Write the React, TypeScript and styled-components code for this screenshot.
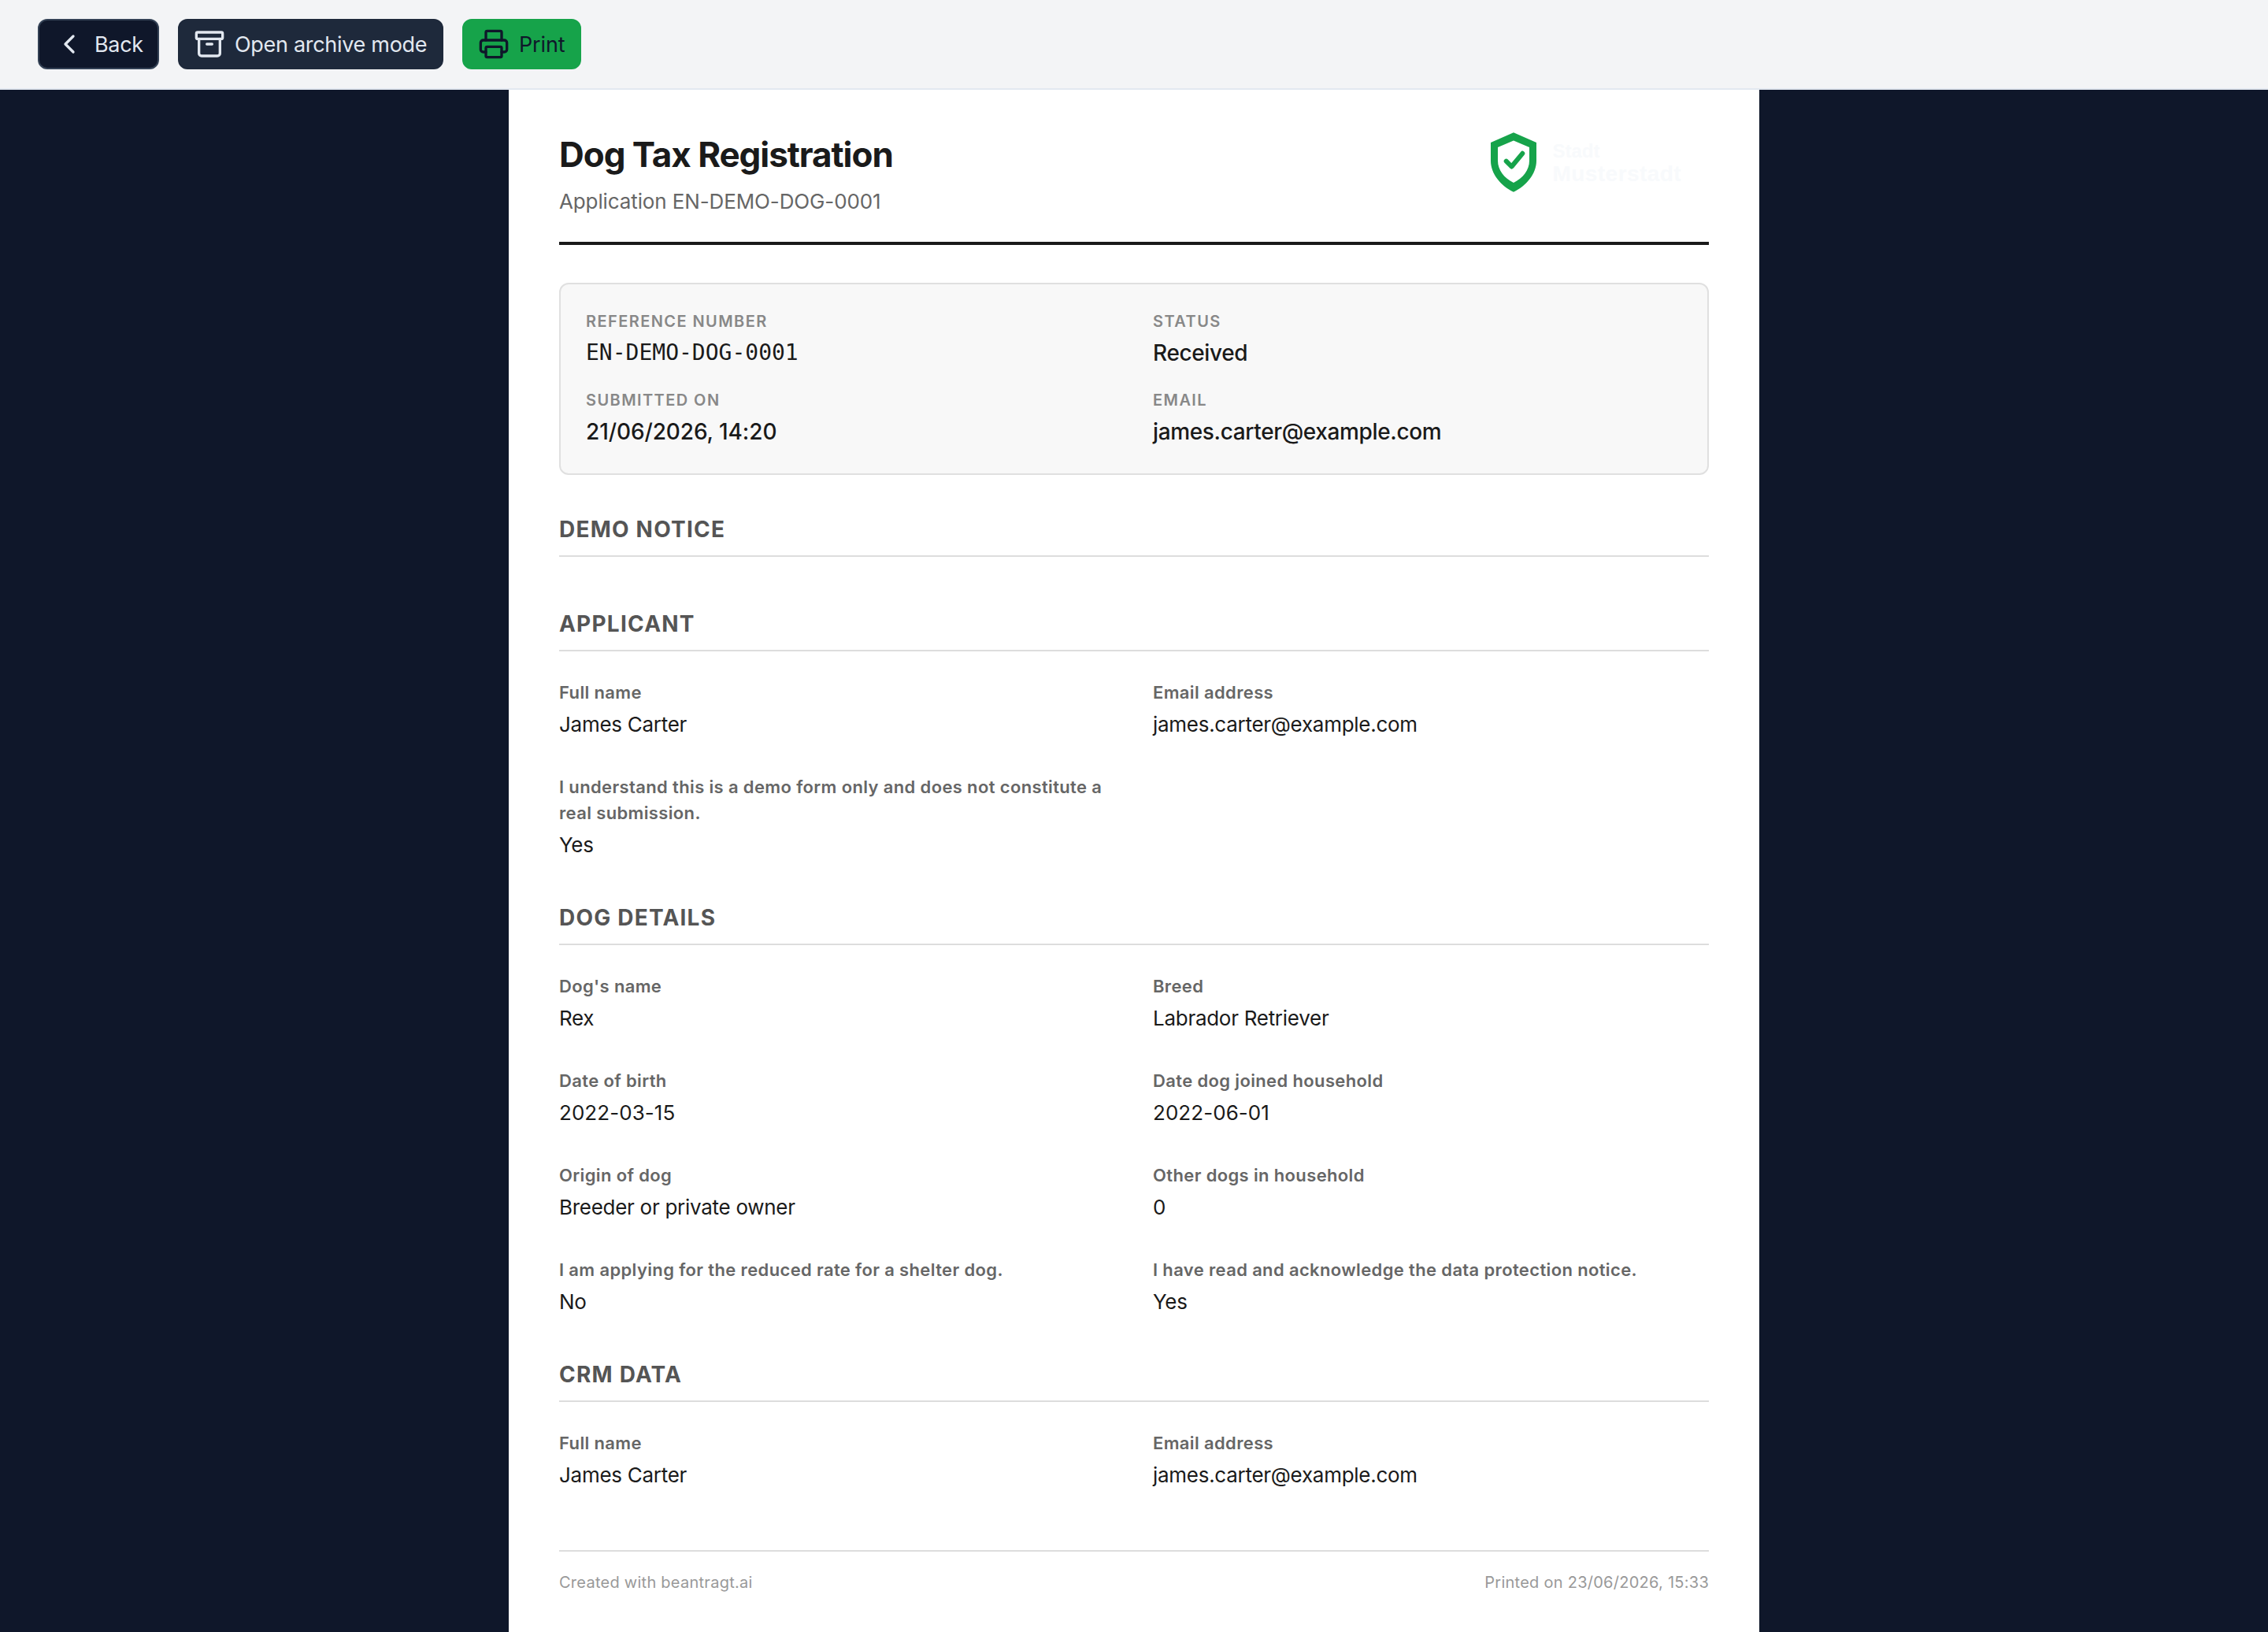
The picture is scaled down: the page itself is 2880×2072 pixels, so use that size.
import React from "react";
import styled, { createGlobalStyle } from "styled-components";

const sans = `Inter, "Liberation Sans", sans-serif`;

const GlobalStyle = createGlobalStyle`
  *, *::before, *::after { box-sizing: border-box; }
  body {
    margin: 0;
    background: #0f172a;
    color: #1a1a1a;
    font-family: ${sans};
    font-optical-sizing: none;
  }
`;

const Screen = styled.div`
  display: flex;
  flex-direction: column;
  height: 2072px;
  overflow: hidden;
  background: #0f172a;
`;

const Toolbar = styled.header`
  display: flex;
  align-items: flex-start;
  gap: 24px;
  flex: none;
  height: 114px;
  padding: 24px 48px;
  background: #f3f4f6;
  border-bottom: 2px solid #e2e8f0;
`;

const Button = styled.button<{ $bg: string; $fg: string; $border: string; $width: number }>`
  display: flex;
  align-items: center;
  gap: 12px;
  width: ${(p) => p.$width}px;
  height: 64px;
  padding: 0 0 0 18px;
  border: 2px solid ${(p) => p.$border};
  border-radius: 12px;
  background: ${(p) => p.$bg};
  color: ${(p) => p.$fg};
  font: 430 27px/40px ${sans};
  white-space: nowrap;
`;

const Glyph = styled.svg`
  flex: none;
  width: 40px;
  height: 40px;
  fill: none;
  stroke: currentColor;
  stroke-width: 2;
  stroke-linecap: round;
  stroke-linejoin: round;
`;

const Caption = styled.span<{ $spacing: number }>`
  padding-top: 2px;
  letter-spacing: ${(p) => p.$spacing}px;
`;

const Paper = styled.main`
  flex: 1;
  width: 1588px;
  margin: 0 auto;
  padding: 48px 64px 0;
  background: #fff;
`;

const DocHeader = styled.div`
  display: flex;
  justify-content: space-between;
  align-items: flex-start;
  padding-bottom: 32px;
  margin-bottom: 48px;
  border-bottom: 4px solid #1a1a1a;
`;

const Title = styled.h1`
  height: 66px;
  margin: 0 0 8px;
  font-size: 44px;
  font-weight: 700;
  line-height: 68px;
  letter-spacing: -1.06px;
`;

const Subtitle = styled.p`
  margin: 0;
  color: #666;
  font-size: 26px;
  line-height: 39px;
  letter-spacing: -0.12px;
`;

const Logo = styled.svg`
  flex: none;
  width: 290px;
  height: 96px;
`;

const Summary = styled.div`
  display: grid;
  grid-template-columns: 1fr 1fr;
  gap: 24px 48px;
  padding: 32px;
  margin-bottom: 48px;
  border: 2px solid #e0e0e0;
  border-radius: 12px;
  background: #f8f8f8;
`;

const SummaryLabel = styled.div`
  margin-bottom: 4px;
  color: #888;
  font-size: 20px;
  font-weight: 600;
  line-height: 30px;
  letter-spacing: 1.42px;
  text-transform: uppercase;
`;

const SummaryValue = styled.div<{ $mono?: boolean; $numeric: boolean }>`
  height: 42px;
  font-size: 28px;
  font-weight: 500;
  line-height: 42px;
  letter-spacing: ${(p) => (p.$mono ? 0 : p.$numeric ? -0.1 : -0.36)}px;
  ${(p) => p.$mono && `
    font-family: "DejaVu Sans Mono", monospace;
    font-weight: 400;
  `}
`;

const Section = styled.section`
  margin-bottom: 28px;
`;

const SectionTitle = styled.h2`
  margin: 0 0 36px;
  padding-bottom: 12px;
  border-bottom: 2px solid #ddd;
  color: #555;
  font-size: 28px;
  font-weight: 650;
  line-height: 42px;
  letter-spacing: 1.22px;
  text-transform: uppercase;
`;

const Fields = styled.div`
  display: grid;
  grid-template-columns: 1fr 1fr;
  gap: 20px 48px;
`;

const Field = styled.div`
  margin-bottom: 24px;
`;

const FieldLabel = styled.div`
  margin-bottom: 4px;
  color: #666;
  font-size: 22px;
  font-weight: 600;
  line-height: 33px;
  letter-spacing: 0.36px;
`;

const FieldValue = styled.div<{ $numeric: boolean }>`
  font-size: 26px;
  line-height: 39px;
  letter-spacing: ${(p) => (p.$numeric ? 0.05 : -0.28)}px;
`;

const Footer = styled.footer`
  display: flex;
  justify-content: space-between;
  margin-top: 52px;
  padding-top: 24px;
  border-top: 2px solid #ddd;
  color: #999;
  font-size: 20px;
  line-height: 30px;
  letter-spacing: 0.26px;
`;

const isNumeric = (value: string) => /^\d/.test(value);

const summary = [
  { label: "Reference number", value: "EN-DEMO-DOG-0001", mono: true },
  { label: "Status", value: "Received" },
  { label: "Submitted on", value: "21/06/2026, 14:20" },
  { label: "Email", value: "james.carter@example.com" },
];

const sections: { title: string; fields: [string, string][] }[] = [
  { title: "Demo notice", fields: [] },
  {
    title: "Applicant",
    fields: [
      ["Full name", "James Carter"],
      ["Email address", "james.carter@example.com"],
      ["I understand this is a demo form only and does not constitute a real submission.", "Yes"],
    ],
  },
  {
    title: "Dog details",
    fields: [
      ["Dog's name", "Rex"],
      ["Breed", "Labrador Retriever"],
      ["Date of birth", "2022-03-15"],
      ["Date dog joined household", "2022-06-01"],
      ["Origin of dog", "Breeder or private owner"],
      ["Other dogs in household", "0"],
      ["I am applying for the reduced rate for a shelter dog.", "No"],
      ["I have read and acknowledge the data protection notice.", "Yes"],
    ],
  },
  {
    title: "CRM data",
    fields: [
      ["Full name", "James Carter"],
      ["Email address", "james.carter@example.com"],
    ],
  },
];

export default function App() {
  return (
    <Screen>
      <GlobalStyle />
      <Toolbar>
        <Button $bg="#0f172a" $fg="#e2e8f0" $border="#334155" $width={154}>
          <Glyph viewBox="0 0 24 24"><path d="M15 6l-6 6l6 6" /></Glyph>
          <Caption $spacing={-0.3}>Back</Caption>
        </Button>
        <Button $bg="#1e293b" $fg="#e2e8f0" $border="#1e293b" $width={337}>
          <Glyph viewBox="0 0 24 24">
            <rect x="2" y="3" width="20" height="5" rx="1" />
            <path d="M4 8v11a2 2 0 0 0 2 2h12a2 2 0 0 0 2-2V8M10 12h4" />
          </Glyph>
          <Caption $spacing={-0.3}>Open archive mode</Caption>
        </Button>
        <Button $bg="#16a34a" $fg="#0f172a" $border="#16a34a" $width={151}>
          <Glyph viewBox="0 0 24 24">
            <path d="M6 18H4a2 2 0 0 1-2-2v-5a2 2 0 0 1 2-2h16a2 2 0 0 1 2 2v5a2 2 0 0 1-2 2h-2" />
            <path d="M6 9V3a1 1 0 0 1 1-1h10a1 1 0 0 1 1 1v6" />
            <rect x="6" y="14" width="12" height="8" rx="1" />
          </Glyph>
          <Caption $spacing={-0.15}>Print</Caption>
        </Button>
      </Toolbar>
      <Paper>
        <DocHeader>
          <div>
            <Title>Dog Tax Registration</Title>
            <Subtitle>Application EN-DEMO-DOG-0001</Subtitle>
          </div>
          <Logo viewBox="1880 162 290 96">
            <path fill="#16a34a" fillRule="evenodd" d="M1922 168.3L1951 181V204C1951 221 1938 236 1922 243.7C1906 236 1893 221 1893 204V181ZM1922 178.5L1902 187V204C1902 216 1910 226 1922 232C1934 226 1942 216 1942 204V187Z" />
            <path d="M1912.7 204.7L1919.5 211.5L1933.3 194.8" fill="none" stroke="#16a34a" strokeWidth="6" strokeLinecap="round" strokeLinejoin="round" />
            <g fill="#f8fafc" fontFamily='"Liberation Sans", Arial, sans-serif' fontWeight="700">
              <text x="1971.5" y="200" fontSize="24">Stadt</text>
              <text x="1971.5" y="230" fontSize="28" letterSpacing="0.45">Musterstadt</text>
            </g>
          </Logo>
        </DocHeader>
        <Summary>
          {summary.map((s) => (
            <div key={s.label}>
              <SummaryLabel>{s.label}</SummaryLabel>
              <SummaryValue $mono={s.mono} $numeric={isNumeric(s.value)}>{s.value}</SummaryValue>
            </div>
          ))}
        </Summary>
        {sections.map((s) => (
          <Section key={s.title}>
            <SectionTitle>{s.title}</SectionTitle>
            <Fields>
              {s.fields.map(([label, value]) => (
                <Field key={label}>
                  <FieldLabel>{label}</FieldLabel>
                  <FieldValue $numeric={isNumeric(value)}>{value}</FieldValue>
                </Field>
              ))}
            </Fields>
          </Section>
        ))}
        <Footer>
          <span>Created with beantragt.ai</span>
          <span>Printed on 23/06/2026, 15:33</span>
        </Footer>
      </Paper>
    </Screen>
  );
}
